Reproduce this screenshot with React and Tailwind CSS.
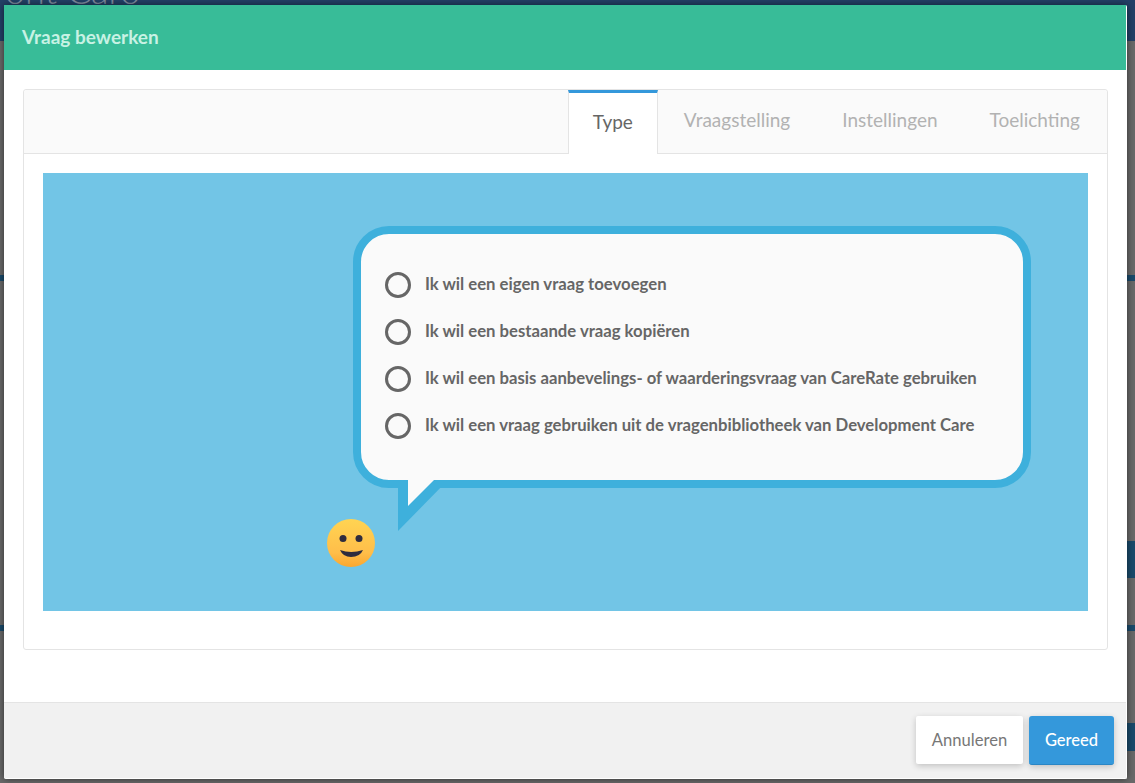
import React from "react"

const font = { fontFamily: 'Lato, "Noto Sans", sans-serif' }

const options = [
  "Ik wil een eigen vraag toevoegen",
  "Ik wil een bestaande vraag kopiëren",
  "Ik wil een basis aanbevelings- of waarderingsvraag van CareRate gebruiken",
  "Ik wil een vraag gebruiken uit de vragenbibliotheek van Development Care",
]

function Smiley() {
  return (
    <svg width="48" height="48" viewBox="0 0 48 48" className="absolute left-[284px] top-[346px]">
      <defs>
        <linearGradient id="face" x1="0" y1="0" x2="0" y2="1">
          <stop offset="0" stopColor="#ffd452" />
          <stop offset="0.7" stopColor="#ffbe4a" />
          <stop offset="1" stopColor="#fba72f" />
        </linearGradient>
      </defs>
      <circle cx="24" cy="24" r="24" fill="url(#face)" />
      <circle cx="16" cy="19.5" r="3.5" fill="#2f2c3e" />
      <circle cx="32" cy="19.5" r="3.5" fill="#2f2c3e" />
      <path d="M13 31 Q24 35 36 31 Q33 38 24 38 Q16 38 13 31 Z" fill="#2f2c3e" />
    </svg>
  )
}

function Bubble() {
  return (
    <div className="absolute left-[310px] top-[53px] w-[678px] h-[262px] rounded-[36px] border-[8px] border-[#3eb0dc] bg-[#fafafa] pl-[24px] pt-[38px]">
      <div className="flex flex-col gap-[21px]">
        {options.map((o) => (
          <div key={o} className="flex items-center h-[26px]">
            <span className="w-[26px] h-[26px] rounded-full border-[3px] border-[#666] shrink-0" />
            <span className="ml-[14px] text-[16.7px] font-bold leading-[24px] pb-[2px] text-[#666] whitespace-nowrap">{o}</span>
          </div>
        ))}
      </div>
      <svg width="50" height="51" viewBox="0 0 50 51" className="absolute left-[37px] top-[246px]">
        <path d="M0 0 L0 51 L50 0 Z" fill="#3eb0dc" />
        <path d="M10 0 L10 26 L36 0 Z" fill="#fafafa" />
      </svg>
    </div>
  )
}

// what shows of the page behind the dialog, on both sides
function PageBehind() {
  return (
    <div className="flex flex-col h-full">
      <div className="h-[41px] bg-[#234067] shrink-0 overflow-hidden">
        <div className="-mt-[31px] pl-[5px] text-[36px] leading-[42px] font-light text-[#7f8ca0] whitespace-nowrap">ont Caro</div>
      </div>
      <div className="flex justify-between flex-1">
        <div className="w-[4px] flex flex-col">
          <div className="h-[234px]" />
          <div className="h-[6px] bg-[#1a4a6b]" />
          <div className="h-[344px]" />
          <div className="h-[6px] bg-[#1a4a6b]" />
        </div>
        <div className="w-[8px] flex flex-col">
          <div className="h-[234px]" />
          <div className="h-[6px] bg-[#1a4a6b]" />
          <div className="h-[260px]" />
          <div className="h-[37px] bg-[#1a4a6b]" />
          <div className="h-[47px]" />
          <div className="h-[6px] bg-[#1a4a6b]" />
          <div className="h-[92px]" />
          <div className="h-[28px] bg-[#1a4a6b]" />
        </div>
      </div>
    </div>
  )
}

export default function App() {
  return (
    <div className="relative w-[1135px] h-[783px] overflow-hidden bg-[#696969]" style={font}>
      <PageBehind />
      <div className="absolute left-[4px] top-[5px] w-[1123px] h-[774px] flex flex-col bg-white border-r border-b border-white rounded-[2px] shadow-[0_0_7px_rgba(0,0,0,0.55)]">
        <div className="h-[65px] bg-[#38bc98] flex items-center pl-[18px] text-[19px] font-bold text-[#c8f2e4] shrink-0">
          Vraag bewerken
        </div>
        <div className="flex-1 px-[19px] pt-[19px]">
          <div className="w-[1085px] h-[561px] border border-[#e4e4e4] rounded-[3px] flex flex-col">
            <div className="h-[64px] bg-[#fafafa] border-b border-[#e4e4e4] flex justify-end shrink-0 rounded-t-[3px]">
              <div className="w-[90px] h-[64px] bg-white border-x border-[#e4e4e4] border-t-[3px] border-t-[#3498db] flex justify-center pt-[15px] text-[19px] text-[#666]">
                Type
              </div>
              <div className="flex text-[19px] text-[#b2b2b2] pt-[16px] pl-[26px] pr-[27px] gap-[52px]">
                <span>Vraagstelling</span>
                <span>Instellingen</span>
                <span>Toelichting</span>
              </div>
            </div>
            <div className="flex-1 p-[19px] pb-[38px]">
              <div className="relative h-[438px] bg-[#72c5e6]">
                <Bubble />
                <Smiley />
              </div>
            </div>
          </div>
        </div>
        <div className="h-[76px] bg-[#f1f1f1] border-t border-[#e4e4e4] flex justify-end items-start pt-[13px] pr-[12px] gap-[6px] shrink-0">
          <button className="w-[107px] h-[48px] bg-white text-[16.6px] text-[#777] shadow-[0_2px_6px_rgba(0,0,0,0.2)] rounded-[2px]">
            Annuleren
          </button>
          <button className="w-[85px] h-[49px] bg-[#3498db] text-[16.5px] font-medium text-white border-b border-[#2a86c5] shadow-[0_2px_6px_rgba(0,0,0,0.2)] rounded-[3px]">
            Gereed
          </button>
        </div>
      </div>
    </div>
  )
}
